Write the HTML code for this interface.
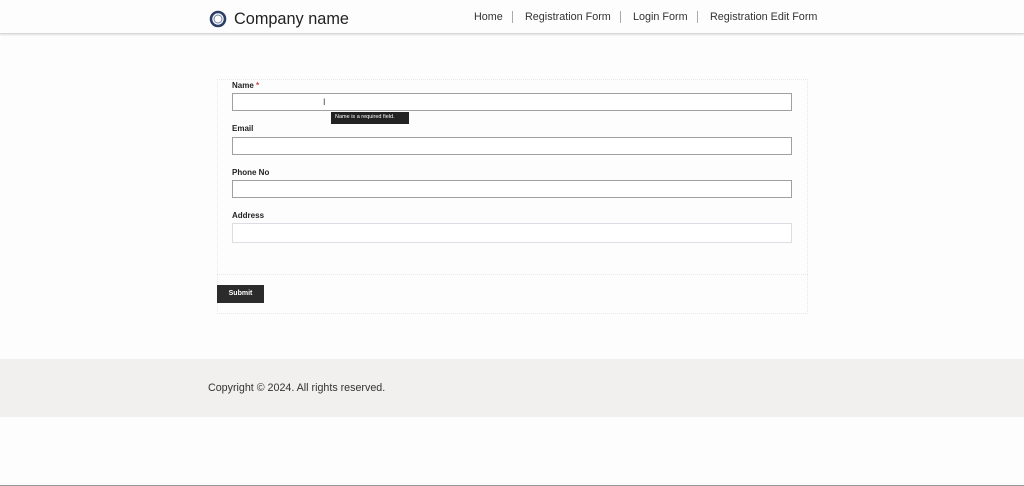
<!DOCTYPE html>
<html><head><meta charset="utf-8"><style>
*{box-sizing:border-box;margin:0;padding:0}
body{width:1024px;height:486px;background:#fdfdfd;font-family:"Liberation Sans",sans-serif;position:relative;overflow:hidden}
.hdr{position:absolute;left:0;top:0;width:1024px;height:34px;background:#fdfdfd;border-bottom:1px solid #d8d8dc;box-shadow:0 1px 2px rgba(0,0,0,.12)}
.logo{position:absolute;left:209px;top:10px}
.cname{position:absolute;left:234px;top:10px;font-size:16.3px;color:#222}
.nav{position:absolute;top:11px;font-size:10.8px;color:#333}
.sep{position:absolute;top:11px;width:1px;height:12px;background:#aaa}
.form{position:absolute;left:217px;top:79px;width:591px;height:235px;border:1px dotted #e8e8ec}
.lbl{position:absolute;left:232px;font-size:8px;font-weight:bold;color:#222}
.inp{position:absolute;left:232px;width:560px;height:18px;border:1px solid #a0a0a0;background:#fff}
.tip{position:absolute;left:331px;top:112px;background:#222;color:#fff;font-size:5.5px;padding:2px 4px;height:12px;width:78px}
.btn{position:absolute;left:217px;top:285px;width:47px;height:18px;background:#2b2b2b;color:#fff;font-size:7px;font-weight:bold;text-align:center;line-height:18px}
.ftr{position:absolute;left:0;top:359px;width:1024px;height:58px;background:#f1f0ef}
.ftr span{position:absolute;left:208px;top:23px;font-size:10.7px;color:#333}
</style></head><body>
<div class="hdr">
<svg class="logo" width="18" height="18" viewBox="0 0 18 18"><circle cx="9" cy="9" r="7" fill="none" stroke="#2c3e66" stroke-width="2.6"/><circle cx="9" cy="9" r="4" fill="none" stroke="#6d7fa8" stroke-width="1"/></svg>
<div class="cname">Company name</div>
<div class="nav" style="left:474px">Home</div><div class="sep" style="left:512px"></div>
<div class="nav" style="left:525px">Registration Form</div><div class="sep" style="left:620px"></div>
<div class="nav" style="left:633px">Login Form</div><div class="sep" style="left:697px"></div>
<div class="nav" style="left:710px">Registration Edit Form</div>
</div>
<div class="form"></div>
<div style="position:absolute;left:217px;top:274px;width:591px;border-top:1px dotted #e8e8ec"></div>
<div class="lbl" style="top:81px">Name <span style="color:#c44">*</span></div>
<div class="inp" style="top:93px"></div>
<div style="position:absolute;left:323px;top:97px;font-size:9px;color:#444">I</div>
<div class="tip">Name is a required field.</div>
<div class="lbl" style="top:124px">Email</div>
<div class="inp" style="top:137px"></div>
<div class="lbl" style="top:168px">Phone No</div>
<div class="inp" style="top:180px"></div>
<div class="lbl" style="top:211px">Address</div>
<div class="inp" style="top:223px;height:20px;border-color:#dcdce4"></div>
<div class="btn">Submit</div>
<div class="ftr"><span>Copyright © 2024. All rights reserved.</span></div>
<div style="position:absolute;left:0;top:485px;width:1024px;height:1px;background:#999"></div>
</body></html>
